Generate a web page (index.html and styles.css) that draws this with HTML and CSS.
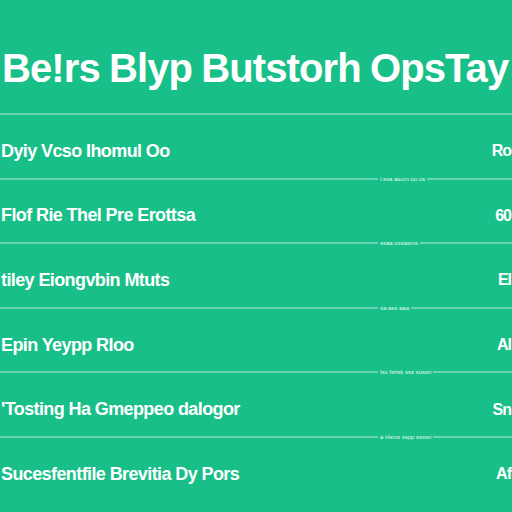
FILE: index.html
```html
<!DOCTYPE html>
<html>
<head>
<meta charset="utf-8">
<link rel="stylesheet" href="styles.css">
</head>
<body>
<div class="page">
  <h1 class="title">Be!rs Blyp Butstorh OpsTay</h1>
  <ul class="list">
    <li class="row"><span class="label">Dyiy Vcso Ihomul Oo</span><span class="value">Ro</span><span class="tag">i.ssa asum oo:os</span></li>
    <li class="row"><span class="label">Flof Rie Thel Pre Erottsa</span><span class="value">60</span><span class="tag">ssaa:ussasms</span></li>
    <li class="row"><span class="label">tiley Eiongvbin Mtuts</span><span class="value">El</span><span class="tag">sa:ass aaa</span></li>
    <li class="row"><span class="label">Epin Yeypp Rloo</span><span class="value">Al</span><span class="tag">lsu fshsk sss sussn</span></li>
    <li class="row"><span class="label">'Tosting Ha Gmeppeo dalogor</span><span class="value">Sn</span><span class="tag">a Hsins sspp ssssn</span></li>
    <li class="row last"><span class="label">Sucesfentfile Brevitia Dy Pors</span><span class="value">Af</span></li>
  </ul>
</div>
</body>
</html>
```

FILE: styles.css
```css
html, body {
  margin: 0;
  padding: 0;
  background: #19bf88;
}
.page {
  width: 512px;
  height: 512px;
  overflow: hidden;
  font-family: "Liberation Sans", Arial, sans-serif;
  color: #ffffff;
}
.title {
  margin: 0;
  height: 115px;
  padding: 46px 0 0 2px;
  box-sizing: border-box;
  font-size: 40px;
  font-weight: 700;
  line-height: 44px;
  white-space: nowrap;
  letter-spacing: -0.9px;
  word-spacing: -1px;
  border-bottom: 2px solid rgba(255, 255, 255, 0.35);
}
.list {
  list-style: none;
  margin: 0;
  padding: 0;
}
.row {
  position: relative;
  display: flex;
  justify-content: space-between;
  align-items: center;
  height: 62.6px;
  padding: 0 0 0 1px;
  border-bottom: 2px solid rgba(255, 255, 255, 0.35);
  font-size: 18px;
  font-weight: 700;
  letter-spacing: -0.6px;
  white-space: nowrap;
}
.row.last {
  border-bottom: none;
}
.label {
  padding-top: 10px;
}
.value {
  padding-top: 10px;
  padding-right: 1px;
  font-size: 16px;
  letter-spacing: -1px;
}
.tag {
  position: absolute;
  left: 378px;
  bottom: -5px;
  font-size: 6px;
  line-height: 8px;
  letter-spacing: 0;
  font-weight: 400;
  padding: 0 2px;
  background: #19bf88;
  color: rgba(255, 255, 255, 0.9);
}
```
